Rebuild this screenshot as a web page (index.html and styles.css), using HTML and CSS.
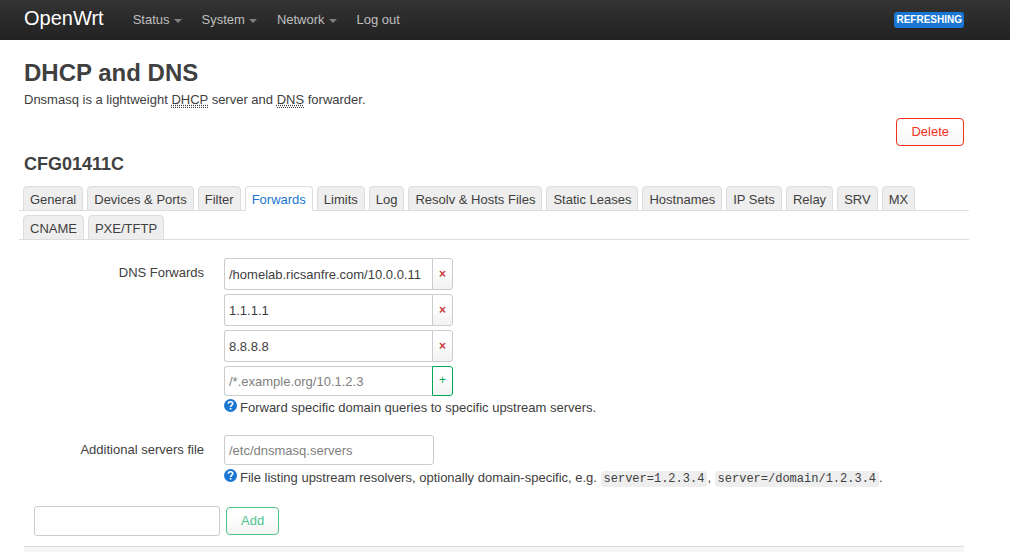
FILE: index.html
```html
<!DOCTYPE html>
<html lang="en">
<head>
<meta charset="utf-8">
<meta name="viewport" content="width=device-width, initial-scale=1">
<title>OpenWrt - DHCP and DNS</title>
<link rel="stylesheet" href="styles.css">
</head>
<body>
<svg class="defs" aria-hidden="true">
  <symbol id="help" viewBox="0 0 13 13">
    <circle cx="6.5" cy="6.5" r="6.5" fill="#1976d2"/>
    <path d="M4.3 4.8C4.3 3.3 5.2 2.7 6.5 2.7C7.9 2.7 8.8 3.4 8.8 4.6C8.8 6 6.6 6.2 6.6 8" fill="none" stroke="#fff" stroke-width="1.6"/>
    <rect x="5.8" y="9" width="1.6" height="1.6" fill="#fff"/>
  </symbol>
</svg>
<header class="topbar">
  <a class="brand" href="#">OpenWrt</a>
  <nav>
    <ul class="menu">
      <li><a class="has-menu" href="#">Status</a></li>
      <li><a class="has-menu" href="#">System</a></li>
      <li><a class="has-menu" href="#">Network</a></li>
      <li><a href="#">Log out</a></li>
    </ul>
  </nav>
  <button class="indicator" type="button">Refreshing</button>
</header>
<main class="container">
  <h1>DHCP and DNS</h1>
  <p class="description">Dnsmasq is a lightweight <abbr title="Dynamic Host Configuration Protocol">DHCP</abbr> server and <abbr title="Domain Name System">DNS</abbr> forwarder.</p>
  <div class="section-remove"><button class="btn btn-negative" type="button">Delete</button></div>
  <h2>CFG01411C</h2>
  <ul class="tabs">
    <li><a href="#">General</a></li>
    <li><a href="#">Devices &amp; Ports</a></li>
    <li><a href="#">Filter</a></li>
    <li><a class="active" href="#">Forwards</a></li>
    <li><a href="#">Limits</a></li>
    <li><a href="#">Log</a></li>
    <li><a href="#">Resolv &amp; Hosts Files</a></li>
    <li><a href="#">Static Leases</a></li>
    <li><a href="#">Hostnames</a></li>
    <li><a href="#">IP Sets</a></li>
    <li><a href="#">Relay</a></li>
    <li><a href="#">SRV</a></li>
    <li><a href="#">MX</a></li>
    <li><a href="#">CNAME</a></li>
    <li><a href="#">PXE/TFTP</a></li>
  </ul>
  <form>
    <div class="field">
      <label for="forward-new">DNS Forwards</label>
      <div class="field-body">
        <div class="list">
          <div class="item"><input type="text" aria-label="Forward 1" value="/homelab.ricsanfre.com/10.0.0.11"><button type="button" aria-label="Remove forward 1">×</button></div>
          <div class="item"><input type="text" aria-label="Forward 2" value="1.1.1.1"><button type="button" aria-label="Remove forward 2">×</button></div>
          <div class="item"><input type="text" aria-label="Forward 3" value="8.8.8.8"><button type="button" aria-label="Remove forward 3">×</button></div>
          <div class="item item-new"><input type="text" id="forward-new" placeholder="/*.example.org/10.1.2.3"><button type="button" aria-label="Add forward">+</button></div>
        </div>
        <p class="help"><svg class="help-icon" aria-hidden="true"><use href="#help"/></svg><span>Forward specific domain queries to specific upstream servers.</span></p>
      </div>
    </div>
    <div class="field">
      <label for="servers-file">Additional servers file</label>
      <div class="field-body">
        <input class="text" type="text" id="servers-file" placeholder="/etc/dnsmasq.servers">
        <p class="help"><svg class="help-icon" aria-hidden="true"><use href="#help"/></svg><span>File listing upstream resolvers, optionally domain-specific, e.g. <code>server=1.2.3.4</code>, <code>server=/domain/1.2.3.4</code>.</span></p>
      </div>
    </div>
    <div class="create">
      <input class="text" type="text" aria-label="New section name">
      <button class="btn btn-add" type="button" disabled>Add</button>
    </div>
  </form>
  <div class="page-actions"></div>
</main>
</body>
</html>
```
FILE: styles.css
```css
* { box-sizing: border-box; }

body {
  display: flex;
  flex-direction: column;
  min-height: 100vh;
  margin: 0;
  background: #fff;
  color: #404040;
  font: 13px/18px "Liberation Sans", Arial, sans-serif;
}

h1, h2, p, ul { margin: 0; padding: 0; }
ul { list-style: none; }
a { color: inherit; text-decoration: none; }
input, button { font: inherit; color: inherit; }
.defs { display: none; }

.topbar {
  display: flex;
  align-items: center;
  height: 40px;
  padding: 0 46px 0 24px;
  background: linear-gradient(#333, #222);
  color: #bfbfbf;
}

.brand {
  margin-right: 29px;
  padding-bottom: 4px;
  color: #fff;
  font-size: 20px;
  line-height: 20px;
}

.menu { display: flex; gap: 20px; }
.menu a { display: flex; align-items: center; gap: 4px; }

.has-menu::after {
  content: "";
  margin-top: 1px;
  border: 4px solid transparent;
  border-top-color: #808080;
  border-bottom: 0;
}

.indicator {
  margin-left: auto;
  padding: 0 2px;
  border: 0;
  border-radius: 3px;
  background: #1976d2;
  color: #fff;
  font-size: 10px;
  font-weight: bold;
  line-height: 16px;
  text-transform: uppercase;
}

.container {
  display: flex;
  flex: 1;
  flex-direction: column;
  padding: 15px 46px 0 24px;
}

h1 { font-size: 24px; line-height: 36px; }
h2 { font-size: 18px; line-height: 36px; }

.description abbr {
  border-bottom: 1px dotted #404040;
  text-decoration: underline dotted;
}

.section-remove {
  display: flex;
  justify-content: flex-end;
  margin-top: 9px;
}

.btn {
  height: 28px;
  padding: 0 14px;
  border: 1px solid;
  border-radius: 4px;
  background: linear-gradient(#fff, #fff 25%, #f5f5f5);
}

.btn-negative { color: #f3301d; }
.btn-add { color: #4dc58d; }

.tabs {
  display: flex;
  flex-wrap: wrap;
  column-gap: 4px;
  margin: 0 -5px 18px;
  padding: 0 4px;
  background: repeating-linear-gradient(transparent 0, transparent 28px, #ddd 28px, #ddd 29px);
}

.tabs a {
  display: block;
  height: 25px;
  margin-top: 4px;
  padding: 0 6px;
  border: 1px solid #ddd;
  border-radius: 4px 4px 0 0;
  background: #eee;
  line-height: 25px;
}

.tabs .active {
  border-bottom-color: #fff;
  background: #fff;
  color: #1976d2;
}

.field {
  display: flex;
  gap: 20px;
  margin-bottom: 18px;
}

.field > label {
  flex: 0 0 180px;
  padding-top: 6px;
  text-align: right;
}

.field-body { flex: 1; min-width: 0; }

.list { display: grid; gap: 4px; }
.item { display: flex; height: 32px; }
.item-new { height: 30px; }

.item input, .text {
  width: 210px;
  height: 100%;
  padding: 0 4px;
  border: 1px solid #ccc;
  border-radius: 3px;
  background: #fff;
}

.item input {
  width: 208px;
  border-right: 0;
  border-radius: 3px 0 0 3px;
}

.text { display: block; height: 30px; }
::placeholder { color: #808080; opacity: 1; }

.item button {
  width: 21px;
  padding: 0;
  border: 1px solid #ccc;
  border-radius: 0 3px 3px 0;
  background: linear-gradient(#fff, #fff 25%, #f2f2f2);
  color: #ca3c3c;
  font-size: 12px;
  font-weight: bold;
}

.item-new button {
  border-color: #00a854;
  color: #00a854;
  font-weight: normal;
  padding-bottom: 2px;
}

.help { display: flex; gap: 3px; padding-top: 3px; }
.text + .help { padding-top: 4px; }
.help-icon { flex: none; width: 13px; height: 13px; }

code {
  padding: 1px 3px;
  border-radius: 3px;
  background: #eee;
  font: 12px/18px "Liberation Mono", monospace;
}

.create {
  display: flex;
  align-items: center;
  gap: 6px;
  padding-left: 10px;
}

.create .text { width: 186px; }

.page-actions {
  flex: 1;
  margin-top: 10px;
  border-top: 1px solid #ddd;
  background: #f5f5f5;
}
```
